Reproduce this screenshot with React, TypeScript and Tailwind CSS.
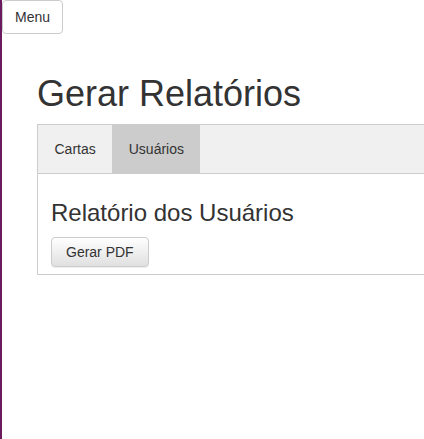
import { useState } from "react";

// abas do painel de relatórios
const tabs = ["Cartas", "Usuários"];

export default function App() {
  const [active, setActive] = useState(1);

  return (
    <div
      className="flex h-[439px] w-[424px] overflow-hidden bg-white text-[#333]"
      style={{ fontFamily: '"Liberation Sans", Arial, sans-serif' }}
    >
      {/* faixa lateral */}
      <div className="w-[2px] shrink-0 bg-[#6a1b5e]" />

      <div className="flex min-w-0 flex-1 flex-col">
        <div>
          <button className="h-[34px] rounded-[4px] border border-[#ccc] bg-white px-[12px] text-[14px] leading-[20px] text-[#333]">
            Menu
          </button>
        </div>

        <div className="pl-[35px]">
          <h1 className="mt-[40px] mb-[10px] text-[36px] leading-[40px] font-normal">
            Gerar Relatórios
          </h1>

          <div className="w-[440px] border border-[#ccc]">
            <div className="flex border-b border-[#ccc] bg-[#f0f0f0]">
              {tabs.map((tab, i) => (
                <button
                  key={tab}
                  onClick={() => setActive(i)}
                  className={`h-[48px] px-[16.5px] text-[14px] leading-[20px] text-[#333] ${
                    active === i ? "bg-[#ccc]" : "bg-transparent"
                  }`}
                >
                  {tab}
                </button>
              ))}
            </div>

            <div className="px-[13px] pt-[26px] pb-[7px]">
              <h3 className="mb-[11px] text-[24px] leading-[26px] font-normal">
                Relatório dos Usuários
              </h3>
              <button className="h-[30px] rounded-[4px] border border-[#ccc] bg-gradient-to-b from-white to-[#e0e0e0] px-[14px] text-[14px] leading-[20px] text-[#333] shadow-[inset_0_1px_0_rgba(255,255,255,0.15),0_1px_1px_rgba(0,0,0,0.075)]">
                Gerar PDF
              </button>
            </div>
          </div>
        </div>
      </div>
    </div>
  );
}
